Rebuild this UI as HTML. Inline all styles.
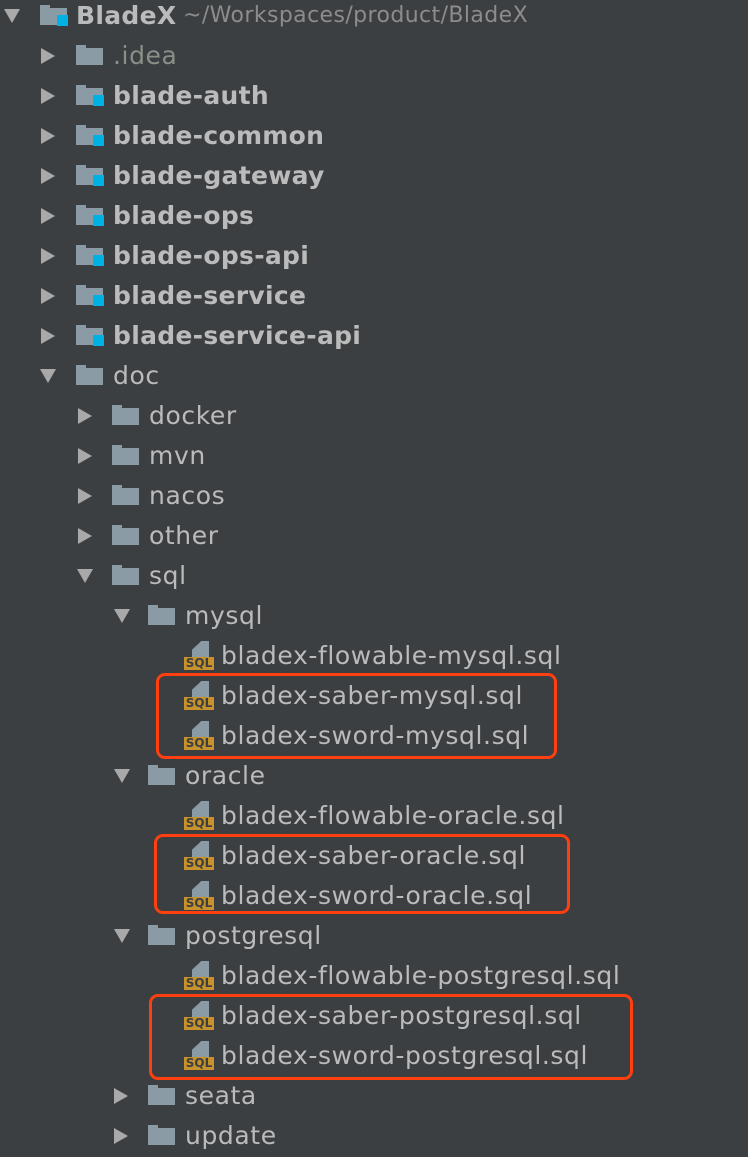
<!DOCTYPE html>
<html><head><meta charset="utf-8"><style>
body{margin:0;width:748px;height:1156px;background:#3c3f41;overflow:hidden;position:relative;font-family:"DejaVu Sans","Liberation Sans",sans-serif;}
.r{position:absolute;left:0;height:40px;line-height:42px;font-size:25px;letter-spacing:0.6px;color:#bbbbbb;white-space:nowrap;}
.t{position:absolute;top:0;}
.tri-r{position:absolute;top:13px;width:0;height:0;border-top:8px solid transparent;border-bottom:8px solid transparent;border-left:14px solid #a9a9a9;}
.tri-d{position:absolute;top:14px;width:0;height:0;border-left:8px solid transparent;border-right:8px solid transparent;border-top:14px solid #a9a9a9;}
.fold{position:absolute;top:10px;width:27px;height:20px;}
.fold:before{content:"";position:absolute;left:0;top:0;width:10px;height:4px;background:#8b9ba5;}
.fold:after{content:"";position:absolute;left:0;top:3px;width:27px;height:17px;background:#8b9ba5;}
.mod{position:absolute;left:17px;top:10px;width:11px;height:11px;background:#00b2e4;z-index:2;}
.sql{position:absolute;top:6px;width:30px;height:30px;}
.sql .d{position:absolute;left:8px;top:0;width:17px;height:16px;background:#8b9ba5;clip-path:polygon(55% 0,100% 0,100% 100%,0 100%,0 55%);}
.sql .l{position:absolute;left:0;top:16px;width:30px;height:13px;background:#c7922b;color:#3c3f41;font:bold 12px/13px "DejaVu Sans",sans-serif;letter-spacing:0;text-align:center;}
.b{font-weight:bold;letter-spacing:0.3px;}
.box{position:absolute;border:3px solid #ff3f0f;border-radius:9px;box-sizing:border-box;}
</style></head><body>

<div class="r" style="top:-5px"><div class="tri-d" style="left:4px"></div><div class="fold" style="left:40px"><div class="mod"></div></div><span class="t b" style="left:76px">BladeX</span><span class="t" style="left:183px;color:#8c8c8c;font-size:22px;letter-spacing:0.4px">~/Workspaces/product/BladeX</span></div>

<div class="r" style="top:35px"><div class="tri-r" style="left:41px"></div><div class="fold" style="left:76px"></div><span class="t" style="left:113px;color:#8a8f88">.idea</span></div>
<div class="r" style="top:75px"><div class="tri-r" style="left:41px"></div><div class="fold" style="left:76px"><div class="mod"></div></div><span class="t b" style="left:113px">blade-auth</span></div>
<div class="r" style="top:115px"><div class="tri-r" style="left:41px"></div><div class="fold" style="left:76px"><div class="mod"></div></div><span class="t b" style="left:113px">blade-common</span></div>
<div class="r" style="top:155px"><div class="tri-r" style="left:41px"></div><div class="fold" style="left:76px"><div class="mod"></div></div><span class="t b" style="left:113px">blade-gateway</span></div>
<div class="r" style="top:195px"><div class="tri-r" style="left:41px"></div><div class="fold" style="left:76px"><div class="mod"></div></div><span class="t b" style="left:113px">blade-ops</span></div>
<div class="r" style="top:235px"><div class="tri-r" style="left:41px"></div><div class="fold" style="left:76px"><div class="mod"></div></div><span class="t b" style="left:113px">blade-ops-api</span></div>
<div class="r" style="top:275px"><div class="tri-r" style="left:41px"></div><div class="fold" style="left:76px"><div class="mod"></div></div><span class="t b" style="left:113px">blade-service</span></div>
<div class="r" style="top:315px"><div class="tri-r" style="left:41px"></div><div class="fold" style="left:76px"><div class="mod"></div></div><span class="t b" style="left:113px">blade-service-api</span></div>
<div class="r" style="top:355px"><div class="tri-d" style="left:40px"></div><div class="fold" style="left:76px"></div><span class="t" style="left:113px">doc</span></div>

<div class="r" style="top:395px"><div class="tri-r" style="left:78px"></div><div class="fold" style="left:112px"></div><span class="t" style="left:149px">docker</span></div>
<div class="r" style="top:435px"><div class="tri-r" style="left:78px"></div><div class="fold" style="left:112px"></div><span class="t" style="left:149px">mvn</span></div>
<div class="r" style="top:475px"><div class="tri-r" style="left:78px"></div><div class="fold" style="left:112px"></div><span class="t" style="left:149px">nacos</span></div>
<div class="r" style="top:515px"><div class="tri-r" style="left:78px"></div><div class="fold" style="left:112px"></div><span class="t" style="left:149px">other</span></div>
<div class="r" style="top:555px"><div class="tri-d" style="left:77px"></div><div class="fold" style="left:112px"></div><span class="t" style="left:149px">sql</span></div>

<div class="r" style="top:595px"><div class="tri-d" style="left:114px"></div><div class="fold" style="left:148px"></div><span class="t" style="left:185px">mysql</span></div>
<div class="r" style="top:635px"><div class="sql" style="left:184px"><div class="d"></div><div class="l">SQL</div></div><span class="t" style="left:221px">bladex-flowable-mysql.sql</span></div>
<div class="r" style="top:675px"><div class="sql" style="left:184px"><div class="d"></div><div class="l">SQL</div></div><span class="t" style="left:221px">bladex-saber-mysql.sql</span></div>
<div class="r" style="top:715px"><div class="sql" style="left:184px"><div class="d"></div><div class="l">SQL</div></div><span class="t" style="left:221px">bladex-sword-mysql.sql</span></div>

<div class="r" style="top:755px"><div class="tri-d" style="left:114px"></div><div class="fold" style="left:148px"></div><span class="t" style="left:185px">oracle</span></div>
<div class="r" style="top:795px"><div class="sql" style="left:184px"><div class="d"></div><div class="l">SQL</div></div><span class="t" style="left:221px">bladex-flowable-oracle.sql</span></div>
<div class="r" style="top:835px"><div class="sql" style="left:184px"><div class="d"></div><div class="l">SQL</div></div><span class="t" style="left:221px">bladex-saber-oracle.sql</span></div>
<div class="r" style="top:875px"><div class="sql" style="left:184px"><div class="d"></div><div class="l">SQL</div></div><span class="t" style="left:221px">bladex-sword-oracle.sql</span></div>

<div class="r" style="top:915px"><div class="tri-d" style="left:114px"></div><div class="fold" style="left:148px"></div><span class="t" style="left:185px">postgresql</span></div>
<div class="r" style="top:955px"><div class="sql" style="left:184px"><div class="d"></div><div class="l">SQL</div></div><span class="t" style="left:221px">bladex-flowable-postgresql.sql</span></div>
<div class="r" style="top:995px"><div class="sql" style="left:184px"><div class="d"></div><div class="l">SQL</div></div><span class="t" style="left:221px">bladex-saber-postgresql.sql</span></div>
<div class="r" style="top:1035px"><div class="sql" style="left:184px"><div class="d"></div><div class="l">SQL</div></div><span class="t" style="left:221px">bladex-sword-postgresql.sql</span></div>

<div class="r" style="top:1075px"><div class="tri-r" style="left:114px"></div><div class="fold" style="left:148px"></div><span class="t" style="left:185px">seata</span></div>
<div class="r" style="top:1115px"><div class="tri-r" style="left:114px"></div><div class="fold" style="left:148px"></div><span class="t" style="left:185px">update</span></div>

<div class="box" style="left:156px;top:673px;width:401px;height:86px"></div>
<div class="box" style="left:154px;top:834px;width:416px;height:80px"></div>
<div class="box" style="left:149px;top:994px;width:484px;height:86px"></div>
</body></html>
